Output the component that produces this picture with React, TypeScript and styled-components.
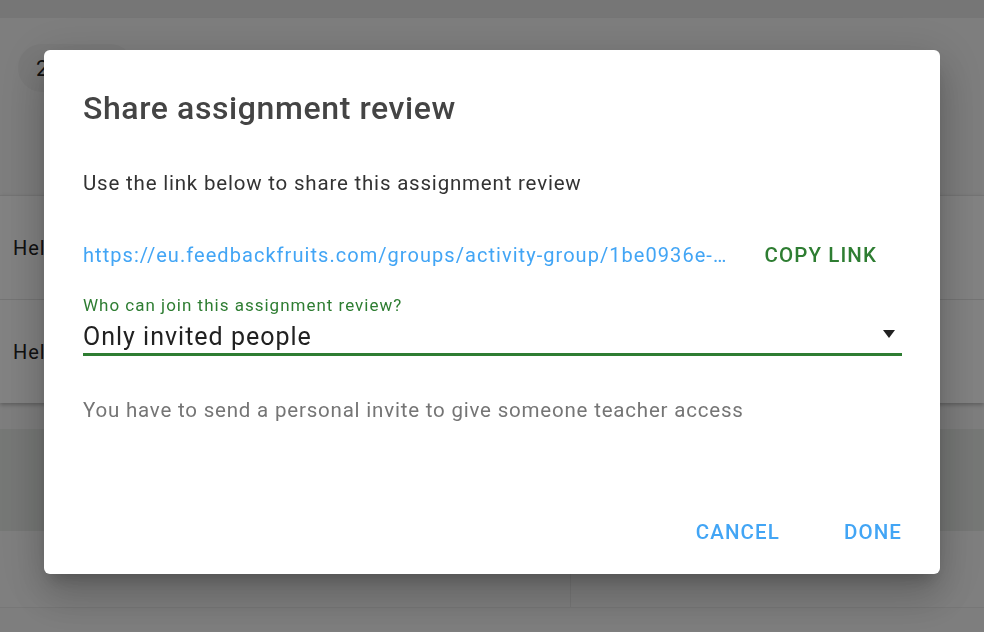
import React from 'react';
import styled, {createGlobalStyle} from 'styled-components';

const GlobalStyle = createGlobalStyle`
  html, body {
    margin: 0;
    padding: 0;
    height: 100%;
  }
  body {
    font-family: Roboto, "Liberation Sans", Arial, sans-serif;
    background: #f7f7f7;
    overflow: hidden;
  }
`;

const Page = styled.div`
  width: 984px;
  height: 632px;
  background: #f7f7f7;
  display: flex;
  flex-direction: column;
`;

const TopBar = styled.div`
  height: 18px;
  background: #e8e8e8;
`;

const Header = styled.div`
  height: 177px;
  padding: 26px 0 0 18px;
  box-sizing: border-box;
`;

const Chip = styled.div`
  width: 116px;
  height: 48px;
  border-radius: 24px;
  background: #eeeeee;
  display: flex;
  align-items: center;
  padding-left: 18px;
  box-sizing: border-box;
  font-size: 22px;
  color: #212121;
  white-space: nowrap;
  overflow: hidden;
`;

const Card = styled.div`
  background: #ffffff;
  border-top: 1px solid #e4e4e4;
  box-shadow: 0 2px 4px rgba(0, 0, 0, 0.25);
`;

const Row = styled.div<{$last?: boolean}>`
  height: 103px;
  display: flex;
  align-items: center;
  padding-left: 13px;
  font-size: 20px;
  letter-spacing: 1px;
  color: #212121;
  border-bottom: ${(p) => (p.$last ? 'none' : '1px solid #e4e4e4')};
`;

const Band = styled.div`
  margin-top: 26px;
  height: 102px;
  background: #e8ebe8;
`;

const SplitRow = styled.div`
  height: 76px;
  display: grid;
  grid-template-columns: 571px 1fr;
  background: #fafafa;
  border-bottom: 1px solid #eaeaea;
`;

const SplitCell = styled.div`
  border-right: 1px solid #eaeaea;
`;

const Overlay = styled.div`
  position: fixed;
  inset: 0;
  background: rgba(0, 0, 0, 0.49);
  display: flex;
  align-items: flex-start;
  justify-content: center;
  padding-top: 50px;
`;

const Dialog = styled.div`
  width: 896px;
  height: 524px;
  background: #ffffff;
  border-radius: 6px;
  box-shadow: 0 11px 15px -7px rgba(0, 0, 0, 0.2), 0 24px 38px 3px rgba(0, 0, 0, 0.14),
    0 9px 46px 8px rgba(0, 0, 0, 0.12);
  box-sizing: border-box;
  padding: 40px 38px 24px 39px;
  display: flex;
  flex-direction: column;
`;

const Title = styled.h2`
  margin: 0;
  font-size: 32px;
  line-height: 36px;
  font-weight: 500;
  letter-spacing: 0.6px;
  color: #444444;
`;

const Text = styled.p<{$muted?: boolean; $gap: number}>`
  margin: ${(p) => p.$gap}px 0 0;
  font-size: 20.5px;
  line-height: 28px;
  letter-spacing: 0.8px;
  color: ${(p) => (p.$muted ? '#757575' : '#333333')};
`;

const LinkRow = styled.div`
  margin-top: 44px;
  display: flex;
  align-items: center;
  height: 28px;
`;

const ShareLink = styled.a`
  flex: 1;
  min-width: 0;
  font-size: 20px;
  line-height: 28px;
  letter-spacing: 1.05px;
  color: #42a5f5;
  text-decoration: none;
  white-space: nowrap;
  overflow: hidden;
  text-overflow: ellipsis;
`;

const TextButton = styled.button<{$color: string}>`
  border: none;
  background: none;
  padding: 0;
  font-family: inherit;
  font-size: 20.5px;
  line-height: 28px;
  font-weight: 500;
  letter-spacing: 1.1px;
  text-transform: uppercase;
  color: ${(p) => p.$color};
  cursor: pointer;
`;

const CopyButton = styled(TextButton)`
  margin: 0 25px 0 33px;
`;

const Field = styled.div`
  margin-top: 25px;
`;

const Label = styled.label`
  display: block;
  font-size: 17px;
  line-height: 22px;
  letter-spacing: 1px;
  color: #2e7d32;
`;

const Select = styled.div`
  margin-top: 5px;
  display: flex;
  align-items: center;
  justify-content: space-between;
  height: 32px;
  border-bottom: 3px solid #2e7d32;
  font-size: 25px;
  line-height: 32px;
  letter-spacing: 1px;
  color: #212121;
`;

const Caret = styled.span`
  width: 0;
  height: 0;
  margin: 0 7px 6px 0;
  border-left: 6.5px solid transparent;
  border-right: 6.5px solid transparent;
  border-top: 8px solid #212121;
`;

const Footer = styled.div`
  margin-top: auto;
  height: 36px;
  display: flex;
  align-items: center;
  justify-content: flex-end;
  gap: 64px;
`;

export default function App() {
  return (
    <>
      <GlobalStyle />
      <Page>
        <TopBar />
        <Header>
          <Chip>2 teachers</Chip>
        </Header>
        <Card>
          <Row>Hello world</Row>
          <Row $last>Hello there</Row>
        </Card>
        <Band />
        <SplitRow>
          <SplitCell />
          <div />
        </SplitRow>
      </Page>
      <Overlay>
        <Dialog role="dialog" aria-labelledby="share-title">
          <Title id="share-title">Share assignment review</Title>
          <Text $gap={43}>Use the link below to share this assignment review</Text>
          <LinkRow>
            <ShareLink href="#">
              https://eu.feedbackfruits.com/groups/activity-group/1be0936e-4c1a-4f2b-9d3e-7a8b2c6d5e10
            </ShareLink>
            <CopyButton $color="#2e7d32">Copy link</CopyButton>
          </LinkRow>
          <Field>
            <Label>Who can join this assignment review?</Label>
            <Select>
              <span>Only invited people</span>
              <Caret />
            </Select>
          </Field>
          <Text $muted $gap={40}>
            You have to send a personal invite to give someone teacher access
          </Text>
          <Footer>
            <TextButton $color="#42a5f5">Cancel</TextButton>
            <TextButton $color="#42a5f5">Done</TextButton>
          </Footer>
        </Dialog>
      </Overlay>
    </>
  );
}
